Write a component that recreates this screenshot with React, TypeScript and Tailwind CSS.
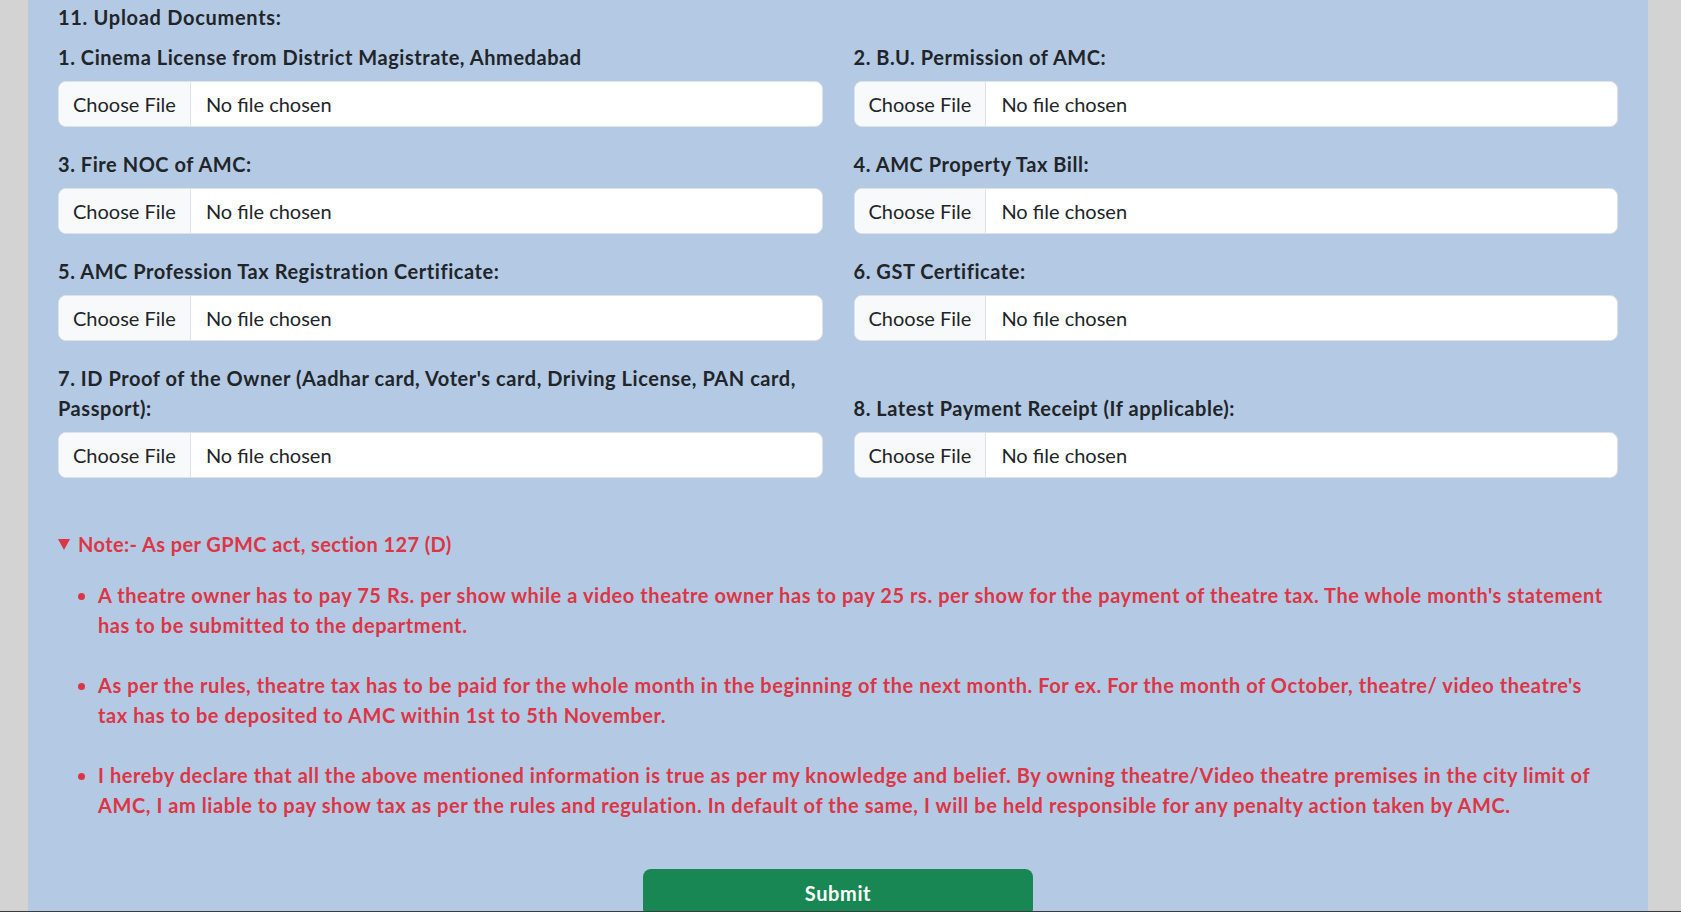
import React from "react";

const docs: { label: React.ReactNode }[] = [
  { label: "1. Cinema License from District Magistrate, Ahmedabad" },
  { label: "2. B.U. Permission of AMC:" },
  { label: "3. Fire NOC of AMC:" },
  { label: "4. AMC Property Tax Bill:" },
  { label: "5. AMC Profession Tax Registration Certificate:" },
  { label: "6. GST Certificate:" },
  {
    label: (
      <>
        7. ID Proof of the Owner (Aadhar card, Voter's card, Driving License, PAN card,
        <br />
        Passport):
      </>
    ),
  },
  { label: "8. Latest Payment Receipt (If applicable):" },
];

function FileInput() {
  return (
    <div className="flex h-[46px] overflow-hidden rounded-[8px] border border-[#dee2e6] bg-white text-[20px] font-normal tracking-normal text-[#212529]">
      <div className="flex items-center border-r border-[#dee2e6] bg-[#f8f9fa] px-[14px]">Choose File</div>
      <div className="flex items-center pl-[15px]">No file chosen</div>
    </div>
  );
}

export default function App() {
  return (
    <div className="min-h-screen bg-[#d3d3d3] font-['Lato',sans-serif] text-[#212529]">
      <div className="ml-[28px] w-[1620px] bg-[#b4cae4] px-[30px] pt-[2px] pb-[40px]">
        <div className="text-[20px] font-bold leading-[30px] tracking-[0.7px]">11. Upload Documents:</div>
        <div className="mt-[10px] grid grid-cols-2 gap-x-[31px] gap-y-[22px]">
          {docs.map((d, i) => (
            <div key={i} className="flex flex-col justify-end">
              <div className="mb-[8px] pb-[1px] text-[20px] font-bold leading-[30px] tracking-[0.55px]">{d.label}</div>
              <FileInput />
            </div>
          ))}
        </div>

        <div className="mt-[51px] text-[20px] font-bold leading-[30px] text-[#dc3545]">
          <div className="flex items-center">
            <svg width="12" height="11" viewBox="0 0 12 11" className="mr-[8px]">
              <polygon points="0,0 12,0 6,11" fill="#dc3545" />
            </svg>
            <span className="tracking-[0.4px]">Note:- As per GPMC act, section 127 (D)</span>
          </div>
          <ul className="mt-[21px] list-disc pl-[40px] tracking-[0.57px]">
            <li className="mb-[30px]">
              A theatre owner has to pay 75 Rs. per show while a video theatre owner has to pay 25 rs. per show for the payment of theatre tax. The whole month's statement
              <br />
              has to be submitted to the department.
            </li>
            <li className="mb-[30px]">
              As per the rules, theatre tax has to be paid for the whole month in the beginning of the next month. For ex. For the month of October, theatre/ video theatre's
              <br />
              tax has to be deposited to AMC within 1st to 5th November.
            </li>
            <li className="mb-[30px]">
              I hereby declare that all the above mentioned information is true as per my knowledge and belief. By owning theatre/Video theatre premises in the city limit of
              <br />
              AMC, I am liable to pay show tax as per the rules and regulation. In default of the same, I will be held responsible for any penalty action taken by AMC.
            </li>
          </ul>
        </div>

        <div className="mt-[49px] flex justify-center">
          <button className="h-[48px] w-[390px] rounded-[8px] bg-[#198754] text-[20px] font-bold tracking-[0.6px] text-white">
            Submit
          </button>
        </div>
      </div>
      <div className="fixed bottom-0 left-0 right-0 h-[1px] bg-[#3b3b3b]" />
    </div>
  );
}
